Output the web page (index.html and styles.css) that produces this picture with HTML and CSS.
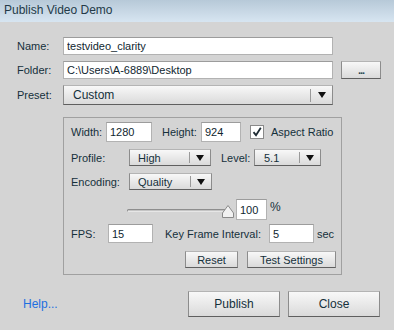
FILE: index.html
```html
<!DOCTYPE html>
<html lang="en">
<head>
    <meta charset="UTF-8">
    <title>Publish Video Demo</title>
    <link rel="stylesheet" href="styles.css">
</head>
<body>
    <div class="window">
        <div class="title_bar">Publish Video Demo</div>

        <div class="content">
            <div class="row">
                <span class="lbl">Name:</span>
                <input class="txt txt_wide" type="text" value="testvideo_clarity">
            </div>
            <div class="row row_gap">
                <span class="lbl">Folder:</span>
                <input class="txt txt_wide" type="text" value="C:\Users\A-6889\Desktop">
                <button class="btn btn_browse">...</button>
            </div>
            <div class="row row_gap">
                <span class="lbl">Preset:</span>
                <div class="select select_preset">
                    <span class="sel_val">Custom</span>
                    <span class="sel_arrow"><i></i></span>
                </div>
            </div>

            <!-- 세부 설정 영역 -->
            <div class="panel">
                <div class="prow prow_size">
                    <span class="plbl w_width">Width:</span>
                    <input class="txt txt_size" type="text" value="1280">
                    <span class="plbl w_height">Height:</span>
                    <input class="txt txt_height" type="text" value="924">
                    <span class="check">
                        <svg width="12" height="12" viewBox="0 0 12 12"><path d="M2.5 6.2 L5 9.2 L9.8 1.8" fill="none" stroke="#1d2b33" stroke-width="1.8"/></svg>
                    </span>
                    <span class="check_lbl">Aspect Ratio</span>
                </div>
                <div class="prow prow_profile">
                    <span class="plbl w_profile">Profile:</span>
                    <div class="select select_profile">
                        <span class="sel_val">High</span>
                        <span class="sel_arrow"><i></i></span>
                    </div>
                    <span class="plbl w_level">Level:</span>
                    <div class="select select_level">
                        <span class="sel_val">5.1</span>
                        <span class="sel_arrow"><i></i></span>
                    </div>
                </div>
                <div class="prow prow_enc">
                    <span class="plbl w_profile">Encoding:</span>
                    <div class="select select_enc">
                        <span class="sel_val">Quality</span>
                        <span class="sel_arrow"><i></i></span>
                    </div>
                </div>
                <div class="prow prow_slider">
                    <div class="slider">
                        <span class="track"></span>
                        <svg class="thumb" width="12" height="13" viewBox="0 0 12 13"><path d="M6 0.5 L11.5 8 L11.5 12.5 L0.5 12.5 L0.5 8 Z" fill="#f2f2f2" stroke="#8a8a8a"/></svg>
                    </div>
                    <input class="txt txt_pct" type="text" value="100">
                    <span class="unit">%</span>
                </div>
                <div class="prow prow_fps">
                    <span class="plbl w_fps">FPS:</span>
                    <input class="txt txt_fps" type="text" value="15">
                    <span class="plbl w_key">Key Frame Interval:</span>
                    <input class="txt txt_fps" type="text" value="5">
                    <span class="unit">sec</span>
                </div>
                <div class="prow prow_btn">
                    <button class="btn btn_reset">Reset</button>
                    <button class="btn btn_test">Test Settings</button>
                </div>
            </div>

            <div class="bottom">
                <a href="#" class="help">Help...</a>
                <button class="btn btn_big btn_publish">Publish</button>
                <button class="btn btn_big btn_close">Close</button>
            </div>
        </div>
    </div>
</body>
</html>
```

FILE: styles.css
```css
/* 초기화 */
body{margin: 0; padding: 0; background: #d4d4d4;
    font-family: "Liberation Sans", Arial, sans-serif; font-size: 11px; color: #15303b;}
a{text-decoration: none;}
button{font: inherit; color: inherit; margin: 0; padding: 0; cursor: pointer;}

/* 레이아웃 */
.window{width: 394px; height: 330px; background: #d4d4d4; overflow: hidden;}
.title_bar{
    height: 22px; line-height: 21px; padding-left: 4px;
    font-size: 12px; color: #233a48;
    background: linear-gradient(#b7c9d8, #d7e5f1);
}
.content{padding: 15px 0 0 17px;}

.row{display: flex; align-items: center;}
.row_gap{margin-top: 6px;}
.lbl{width: 46px;}

/* 입력창 */
.txt{
    box-sizing: border-box; height: 18px; margin: 0;
    border: 1px solid #b2b2b2; border-top-color: #9c9c9c;
    background: #fff; font: inherit; color: #10262f;
    padding: 0 3px; outline: none;
}
.txt_wide{width: 270px;}
.txt_size{width: 46px; height: 20px;}
.txt_height{width: 40px; height: 20px;}
.txt_pct{width: 31px; height: 21px;}
.txt_fps{width: 45px; height: 19px;}

/* 버튼 */
.btn{
    box-sizing: border-box; height: 17px;
    border: 1px solid #8c8c8c; border-top-color: #b4b4b4; border-bottom-color: #5f5f5f;
    background: linear-gradient(#f8f8f8, #dadada);
}
.btn_browse{width: 40px; height: 18px; margin-left: 8px; font-weight: bold; letter-spacing: -1px; color: #2c4a55;}
.btn_reset{width: 53px;}
.btn_test{width: 89px; margin-left: 9px;}
.btn_big{width: 92px; height: 26px; font-size: 12px;}
.btn_close{margin-left: 8px;}

/* 셀렉트 */
.select{
    box-sizing: border-box; display: flex; align-items: center; height: 17px;
    border: 1px solid #8c8c8c; border-top-color: #b4b4b4; border-bottom-color: #5f5f5f;
    background: linear-gradient(#f8f8f8, #dadada);
}
.select .sel_val{flex: 1; padding-left: 8px;}
.select .sel_arrow{
    width: 20px; height: 11px; border-left: 1px solid #9a9a9a;
    display: flex; justify-content: center; align-items: center;
}
.select .sel_arrow i{
    width: 0; height: 0;
    border-left: 4px solid transparent; border-right: 4px solid transparent;
    border-top: 6px solid #111;
}
.select_preset{width: 270px; height: 20px;}
.select_preset .sel_val{padding-left: 9px; font-size: 12px;}
.select_preset .sel_arrow{width: 21px; height: 13px;}
.select_profile{width: 82px;}
.select_level{width: 67px;}
.select_level .sel_val{padding-left: 9px;}
.select_enc{width: 83px;}

/* 패널 */
.panel{
    box-sizing: border-box; width: 279px; height: 158px;
    margin: 12px 0 0 46px; padding: 4px 0 0 7px;
    border: 1px solid #a0a0a0;
}
.prow{display: flex; align-items: center;}
.prow_profile{margin-top: 7px;}
.prow_enc{margin-top: 7px;}
.prow_slider{margin-top: 9px;}
.prow_fps{margin-top: 4px;}
.prow_btn{margin-top: 8px; padding-left: 114px;}

.plbl{flex: none;}
.w_width{width: 35px;}
.w_height{width: 39px; margin-left: 10px;}
.w_profile{width: 58px;}
.w_level{width: 33px; margin-left: 10px;}
.w_fps{width: 37px;}
.w_key{width: 104px; margin-left: 12px;}
.unit{margin-left: 3px;}
.prow_slider .unit{margin-top: -6px; font-size: 12px;}

/* 체크박스 */
.check{
    box-sizing: border-box; width: 14px; height: 14px; margin-left: 9px;
    border: 1px solid #8a8a8a; background: #fff;
    display: flex; justify-content: center; align-items: center;
}
.check_lbl{margin-left: 7px;}

/* 슬라이더 */
.slider{
    position: relative; width: 109px; height: 21px; margin-left: 56px;
    display: flex; align-items: center;
}
.slider .track{
    box-sizing: border-box; width: 101px; height: 3px; margin-top: 1px;
    border: 1px solid #8e8e8e; border-bottom-color: #e6e6e6;
    border-radius: 2px 0 0 2px; background: #c4c4c4;
}
.slider .thumb{position: absolute; left: 95px; top: 6px;}

/* 하단 */
.bottom{display: flex; align-items: center; margin-top: 16px;}
.help{color: #1d6fe0; font-size: 12px; margin-left: 6px; width: 165px;}
```
